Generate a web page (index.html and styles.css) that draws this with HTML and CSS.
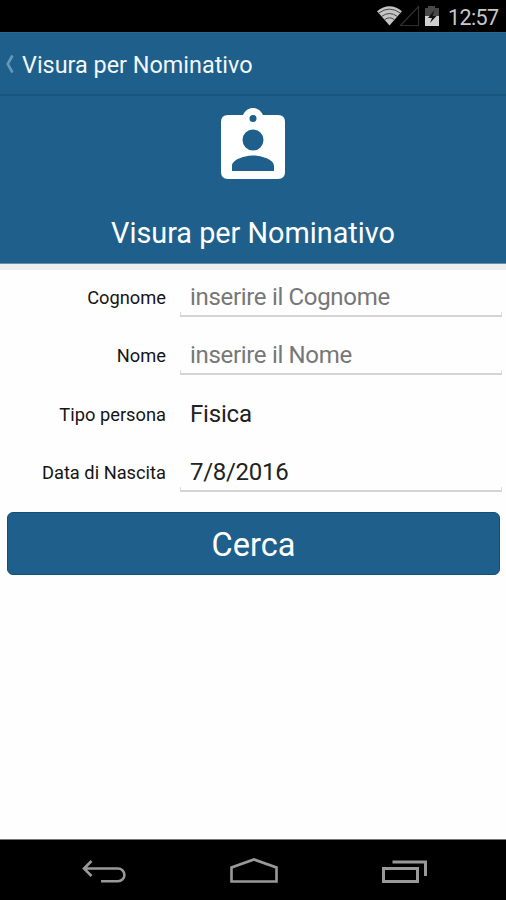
FILE: index.html
```html
<!DOCTYPE html>
<html lang="it">
<head>
<meta charset="utf-8">
<title>Visura per Nominativo</title>
<link rel="stylesheet" href="styles.css">
</head>
<body>
<div class="screen">
  <div class="status">
    <svg class="status-icons" width="64" height="32" viewBox="0 0 64 32">
      <path d="M0 11.2Q12.500 1.500 25 11.200L12.500 25.500Z" fill="#c4c4c4"/>
      <path d="M1.500 13.200Q12.500 5 23.500 13.200M4.500 16.500Q12.500 10.500 20.500 16.500M7.500 19.800Q12.500 15.800 17.500 19.800" fill="none" stroke="#444" stroke-width="1"/>
      <path d="M41.500 6.500V25.500H23.500Z" fill="none" stroke="#303030" stroke-width="1.200"/>
      <path d="M51 6h7v2h4v8H48V8h3z" fill="#484848"/>
      <path d="M48 16h14v10H48z" fill="#d0d0d0"/>
      <path d="M57.500 10L51 18h4l-2 5 6.500-7h-4z" fill="#111"/>
    </svg>
    <span class="clock">12:57</span>
  </div>
  <header class="bar">
    <svg width="9" height="20" viewBox="0 0 9 20"><path d="M7.500 1.500L2.700 10l4.800 8.500" fill="none" stroke="#6698b8" stroke-width="2.600"/></svg>
    <span class="bar-title">Visura per Nominativo</span>
  </header>
  <section class="hero">
    <svg class="badge" width="66" height="73" viewBox="0 0 66 73">
      <path fill="#fff" fill-rule="evenodd" d="M8 7H23C25 2.500 29 0 33 0s8 2.500 10 7H58q7 0 7 7V64q0 7-7 7H8q-7 0-7-7V14Q1 7 8 7ZM33 7a3.500 3.500 0 1 0 0 7a3.500 3.500 0 1 0 0-7ZM33 21.500a10.500 10.500 0 1 0 0 21a10.500 10.500 0 1 0 0-21ZM12 63H54V58C54 51 40 47.500 33 47.500S12 51 12 58Z"/>
    </svg>
    <h1 class="hero-title">Visura per Nominativo</h1>
  </section>
  <main class="form">
    <div class="row"><label class="label">Cognome</label><div class="field lined hint">inserire il Cognome</div></div>
    <div class="row"><label class="label">Nome</label><div class="field lined hint">inserire il Nome</div></div>
    <div class="row"><label class="label">Tipo persona</label><div class="field">Fisica</div></div>
    <div class="row"><label class="label">Data di Nascita</label><div class="field lined date">7/8/2016</div></div>
    <button class="submit">Cerca</button>
  </main>
  <nav class="nav">
    <svg width="506" height="60" viewBox="0 0 506 60" fill="none" stroke="#999" stroke-width="2.600">
      <path d="M84.500 28.500H118a6.300 6.300 0 0 1 0 12.800H101M91.500 21L84 28.500l7.500 7.500"/>
      <path d="M231.500 41.500V27.500L254 19.500l22.500 8V41.500Z"/>
      <path d="M383.500 28.500H417.500V41.500H383.500ZM392.500 22H425.500V36" stroke-width="3"/>
    </svg>
  </nav>
</div>
</body>
</html>
```

FILE: styles.css
```css
* { box-sizing: border-box; }
body { margin: 0; font-family: Roboto, "Liberation Sans", sans-serif; background: #fefefe; }
.screen { width: 506px; height: 900px; display: flex; flex-direction: column; overflow: hidden; }
.status { height: 32px; flex: none; background: #000; display: flex; justify-content: flex-end; padding-right: 8px; }
.status-icons { margin-right: 7px; }
.clock { color: #c8c8c8; font-size: 21.5px; letter-spacing: -0.6px; line-height: 36px; width: 50px; white-space: nowrap; }
.bar { height: 64px; flex: none; background: #1f5f8b; border-top: 1px solid #2a6791; border-bottom: 2px solid #1a557d; display: flex; align-items: center; padding-left: 5px; }
.bar-title { margin-left: 8px; font-size: 23.4px; line-height: 30px; padding-top: 2px; color: #f2f8fd; white-space: nowrap; }
.hero { height: 168px; flex: none; background: #1f5f8b; display: flex; flex-direction: column; align-items: center; border-bottom: 1px solid #6690ab; }
.badge { margin-top: 12px; flex: none; }
.hero-title { margin: 34px 0 0; font-weight: 400; font-size: 28.8px; line-height: 36px; color: #fff; white-space: nowrap; }
.form { flex: 1; border-top: 6px solid #eee; display: flex; flex-direction: column; }
.row { height: 58.400px; flex: none; display: flex; align-items: flex-start; }
.label { width: 166px; text-align: right; font-size: 18.3px; line-height: 55px; color: #151515; white-space: nowrap; }
.field { width: 322px; height: 47px; margin-left: 14px; padding-left: 10px; font-size: 24px; letter-spacing: -0.2px; line-height: 55px; color: #222; white-space: nowrap; }
.lined { background: linear-gradient(#d5d5d5, #d5d5d5) left bottom / 100% 2px no-repeat, linear-gradient(#ddd, #ddd) left bottom / 1px 5px no-repeat, linear-gradient(#ddd, #ddd) right bottom / 1px 5px no-repeat; }
.hint { color: #777; letter-spacing: -0.32px; }
.date { letter-spacing: -0.3px; }
.submit { margin: 8px 6px 0 7px; height: 63px; flex: none; border: 1px solid #12507c; border-radius: 6px; background: #1f5f8b; color: #fff; font-family: inherit; font-size: 32.5px; line-height: 40px; padding: 4px 0 0; }
.nav { height: 61px; flex: none; background: #000; border-top: 1px solid #777; }
.nav svg { display: block; }
```
